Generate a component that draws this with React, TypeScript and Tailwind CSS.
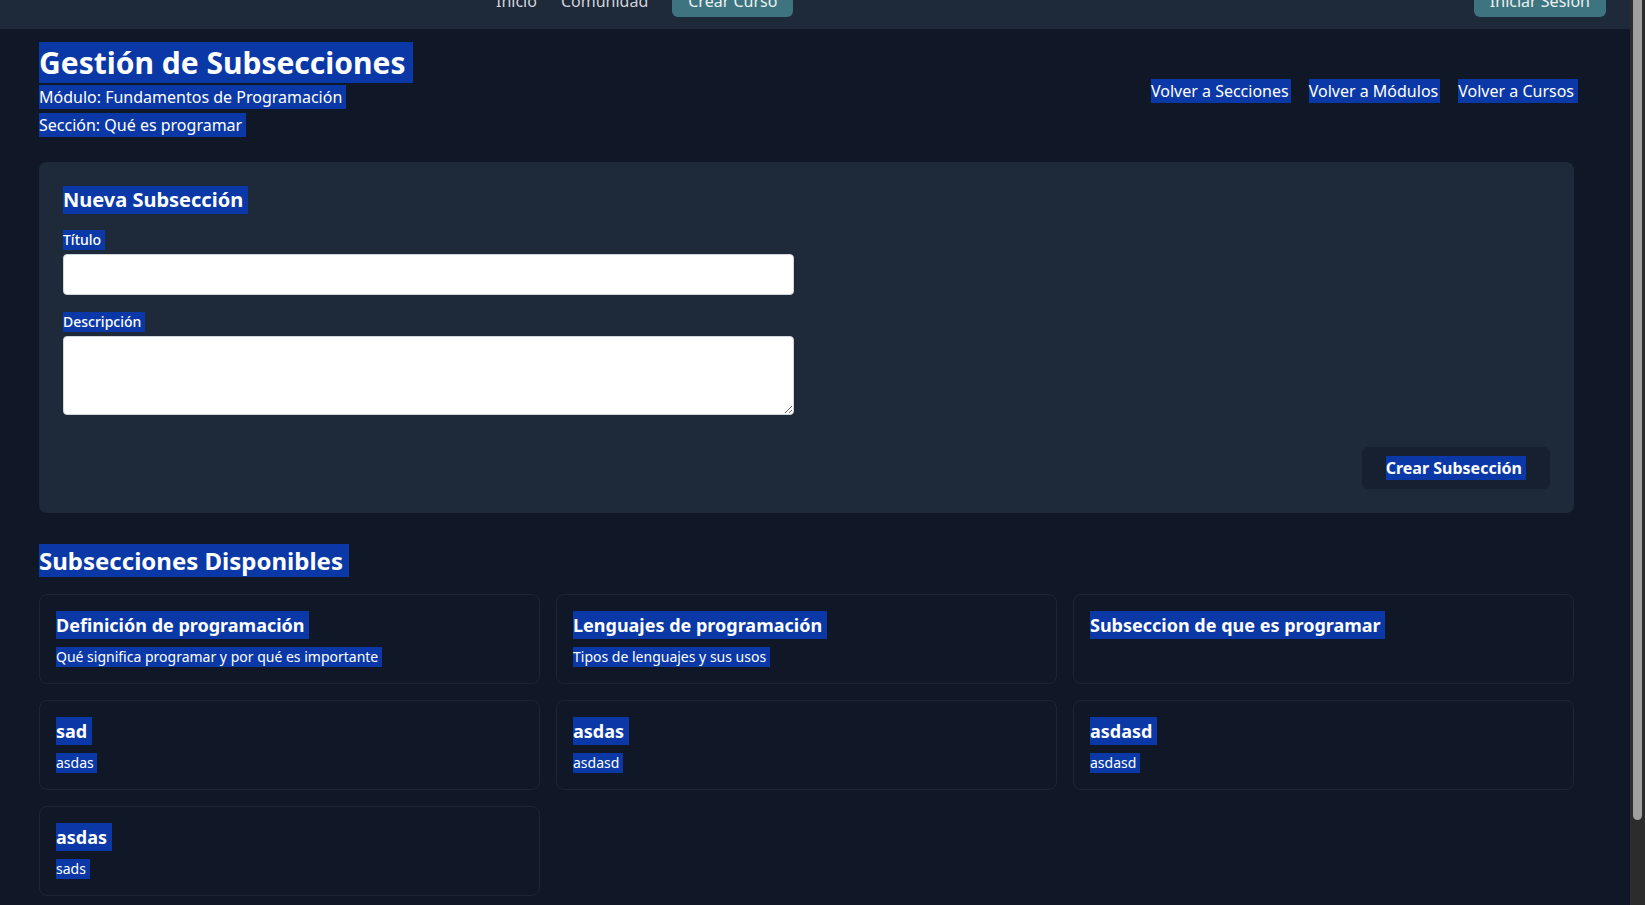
import React from "react";

const hl = "bg-[#0a39a7] text-white pr-[0.26em]";
const hlb = "inline-block bg-[#0a39a7] text-white pr-[0.26em]";

const subs = [
  { t: "Definición de programación", d: "Qué significa programar y por qué es importante" },
  { t: "Lenguajes de programación", d: "Tipos de lenguajes y sus usos" },
  { t: "Subseccion de que es programar", d: "" },
  { t: "sad", d: "asdas" },
  { t: "asdas", d: "asdasd" },
  { t: "asdasd", d: "asdasd" },
  { t: "asdas", d: "sads" },
];

export default function App() {
  return (
    <div
      className="flex h-[905px] w-full overflow-hidden bg-[#101828] text-white"
      style={{ fontFamily: '"Noto Sans", "Open Sans", sans-serif' }}
    >
      <div className="flex-1 min-w-0">
        <nav className="-mt-[27px] flex h-14 items-center bg-[#1e2939] px-6 text-base text-[#d1d5db]">
          <div className="ml-[472px] flex items-center gap-6">
            <span>Inicio</span>
            <span>Comunidad</span>
            <span className="rounded-md bg-[#3d7480] px-4 py-1 text-white/90">Crear Curso</span>
          </div>
          <span className="ml-auto rounded-md bg-[#3d7480] px-4 py-1 text-white/90">Iniciar Sesión</span>
        </nav>

        <main className="pl-[39px] pr-[56px] pt-4">
          <div className="flex items-center justify-between">
            <div className="flex flex-col gap-1">
              <h1 className="text-3xl leading-9 font-bold">
                <span className={hl}>Gestión de Subsecciones</span>
              </h1>
              <p className="text-base leading-6">
                <span className={hlb}>Módulo: Fundamentos de Programación</span>
              </p>
              <p className="text-base leading-6">
                <span className={hlb}>Sección: Qué es programar</span>
              </p>
            </div>
            <div className="flex items-center gap-[18px] text-base leading-6">
              <span className="inline-block bg-[#0a39a7] pr-[2px] text-white">Volver a Secciones</span>
              <span className="inline-block bg-[#0a39a7] pr-[2px] text-white">Volver a Módulos</span>
              <span className={hlb + " mr-[-0.26em]"}>Volver a Cursos</span>
            </div>
          </div>

          <section className="mt-[25px] rounded-lg bg-[#1e2939] p-6">
            <h2 className="mb-4 text-xl leading-7 font-bold">
              <span className={hlb}>Nueva Subsección</span>
            </h2>
            <div className="mb-[17px]">
              <label className="mb-1 block text-sm leading-5 font-medium">
                <span className={hlb}>Título</span>
              </label>
              <input
                type="text"
                className="block h-[41px] w-[731px] rounded border border-gray-300 bg-white px-3 text-black"
              />
            </div>
            <div>
              <label className="mb-1 block text-sm leading-5 font-medium">
                <span className={hlb}>Descripción</span>
              </label>
              <textarea className="block h-[79px] w-[731px] rounded border border-gray-300 bg-white px-3 py-2 text-black" />
            </div>
            <div className="mt-[32px] flex justify-end">
              <button className="flex h-[42px] items-center rounded-md bg-[#172030] px-6 text-base leading-6 font-bold">
                <span className={hlb}>Crear Subsección</span>
              </button>
            </div>
          </section>

          <h2 className="mt-8 mb-[17px] text-2xl leading-8 font-bold">
            <span className={hl}>Subsecciones Disponibles</span>
          </h2>

          <div className="grid grid-cols-3 gap-4">
            {subs.map((s, i) => (
              <div key={i} className="rounded-lg border border-[#1b2536] bg-[#101828] p-4">
                <h3 className="mb-2 text-lg leading-7 font-bold">
                  <span className={hlb}>{s.t}</span>
                </h3>
                <p className="h-5 text-sm leading-5">
                  {s.d ? <span className={hlb}>{s.d}</span> : null}
                </p>
              </div>
            ))}
          </div>
        </main>
      </div>
      <div className="h-[905px] w-[15px] shrink-0 bg-[#2c2c2c]">
        <div className="ml-[3px] h-[820px] w-[9px] rounded-b-full bg-[#9f9f9f]" />
      </div>
    </div>
  );
}
